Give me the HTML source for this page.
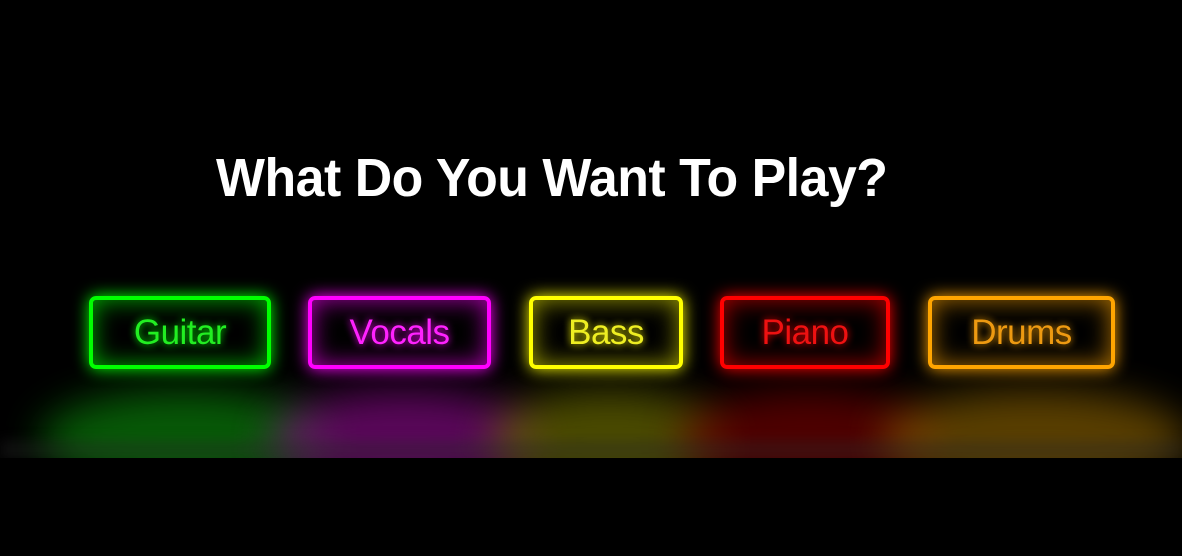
<!DOCTYPE html>
<html><head><meta charset="utf-8"><style>
html,body{margin:0;padding:0;background:#000;width:1182px;height:556px;overflow:hidden;font-family:"Liberation Sans",sans-serif}
h1{position:absolute;left:216px;top:146px;margin:0;color:#fff;font-size:54px;font-weight:bold;white-space:nowrap;transform:scaleX(0.96);transform-origin:left top;line-height:64px;letter-spacing:-0.5px}
.refl{position:absolute;left:0;top:0;width:1182px;height:458px;overflow:hidden}
.r{position:absolute;top:390px;height:100px;border-radius:50%;filter:blur(20px);opacity:.7}
.b{position:absolute;top:296px;height:65px;border:4px solid;border-radius:7px;display:flex;align-items:center;justify-content:center;font-size:35px;box-sizing:content-box;letter-spacing:-0.5px}
</style></head><body>
<div class="refl">
<div class="r" style="left:40px;width:290px;background:#0a800a"></div>
<div class="r" style="left:270px;width:270px;background:#800a80"></div>
<div class="r" style="left:490px;width:240px;background:#6a6a00"></div>
<div class="r" style="left:680px;width:260px;background:#700000"></div>
<div class="r" style="left:880px;width:310px;background:#805a00"></div>
<div style="position:absolute;left:0;top:440px;width:1182px;height:20px;background:rgba(40,40,40,.35);filter:blur(6px)"></div>
</div>
<h1>What Do You Want To Play?</h1>
<div class="b" style="left:89px;width:174px;color:#22ee22;border-color:#00ff00;box-shadow:0 0 16px #00ff00,inset 0 0 24px #00aa00;text-shadow:0 0 8px #00ff00">Guitar</div>
<div class="b" style="left:308px;width:175px;color:#ff22ff;border-color:#ff00ff;box-shadow:0 0 16px #ff00ff,inset 0 0 24px #aa00aa;text-shadow:0 0 8px #ff00ff">Vocals</div>
<div class="b" style="left:529px;width:146px;color:#eeee22;border-color:#ffff00;box-shadow:0 0 16px #ffff00,inset 0 0 24px #999900;text-shadow:0 0 8px #ffff00">Bass</div>
<div class="b" style="left:720px;width:162px;color:#ee1111;border-color:#ff0000;box-shadow:0 0 16px #ff0000,inset 0 0 24px #aa0000;text-shadow:0 0 8px #ff0000">Piano</div>
<div class="b" style="left:928px;width:179px;color:#ee9a11;border-color:#ffa500;box-shadow:0 0 16px #ffa500,inset 0 0 24px #aa6e00;text-shadow:0 0 8px #ffa500">Drums</div>
</body></html>
